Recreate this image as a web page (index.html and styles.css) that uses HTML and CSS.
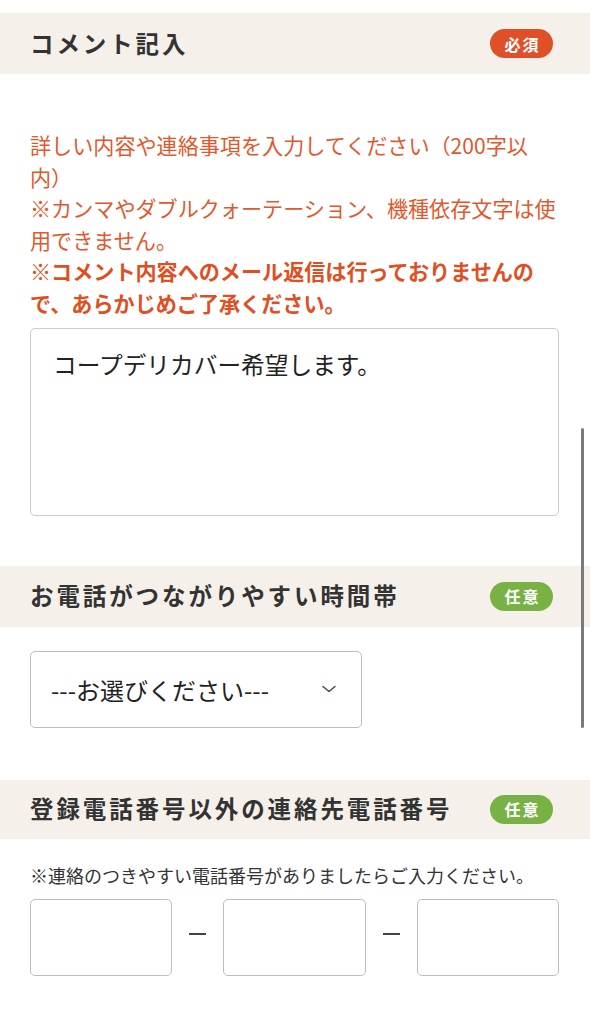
FILE: index.html
```html
<!DOCTYPE html>
<html lang="ja">
<head>
<meta charset="utf-8">
<title>お問い合わせフォーム</title>
<link rel="stylesheet" href="styles.css">
</head>
<body>
<main class="page">
  <section class="field field-comment">
    <div class="field-head">
      <h2 class="field-title">コメント記入</h2>
      <span class="badge badge-required">必須</span>
    </div>
    <div class="field-body">
      <p class="notes">詳しい内容や連絡事項を入力してください（200字以内）<br>※カンマやダブルクォーテーション、機種依存文字は使用できません。<br><strong>※コメント内容へのメール返信は行っておりませんので、あらかじめご了承ください。</strong></p>
      <textarea class="textarea" readonly>コープデリカバー希望します。</textarea>
    </div>
  </section>

  <section class="field field-time">
    <div class="field-head">
      <h2 class="field-title">お電話がつながりやすい時間帯</h2>
      <span class="badge badge-optional">任意</span>
    </div>
    <div class="field-body">
      <div class="select" role="combobox" aria-expanded="false">
        <span class="select-text">---お選びください---</span>
        <svg class="chevron" width="16" height="10" viewBox="0 0 16 10" aria-hidden="true"><path d="M2 2.5 L8 7.5 L14 2.5" fill="none" stroke="#3f5a3c" stroke-width="1.6" stroke-linecap="round" stroke-linejoin="round"/></svg>
      </div>
    </div>
  </section>

  <section class="field field-phone">
    <div class="field-head">
      <h2 class="field-title">登録電話番号以外の連絡先電話番号</h2>
      <span class="badge badge-optional">任意</span>
    </div>
    <div class="field-body">
      <p class="note">※連絡のつきやすい電話番号がありましたらご入力ください。</p>
      <div class="phone-row">
        <input class="input" type="tel" aria-label="市外局番">
        <span class="dash"></span>
        <input class="input" type="tel" aria-label="市内局番">
        <span class="dash"></span>
        <input class="input" type="tel" aria-label="加入者番号">
      </div>
    </div>
  </section>
</main>
<div class="scroll-indicator"></div>
</body>
</html>
```

FILE: styles.css
```css
html, body {
  margin: 0;
  padding: 0;
  background: #ffffff;
}

body {
  font-family: "Noto Sans CJK JP", "Noto Sans", sans-serif;
  color: #222;
}

.page {
  padding-top: 13px;
}

.field-head {
  display: flex;
  align-items: center;
  justify-content: space-between;
  height: 61px;
  padding: 0 37px 0 30px;
  background: #f5f1ea;
}

.field-title {
  margin: 0;
  font-size: 23.5px;
  font-weight: 700;
  letter-spacing: 2.9px;
  color: #333333;
  line-height: 1;
}

.badge {
  display: flex;
  align-items: center;
  justify-content: center;
  width: 63px;
  height: 29px;
  border-radius: 15px;
  color: #ffffff;
  font-size: 16px;
  font-weight: 700;
  letter-spacing: 2px;
  padding-left: 2px;
  box-sizing: border-box;
}

.badge-required {
  background: #df4f28;
}

.badge-optional {
  background: #78b244;
}

.field-body {
  padding: 0 31px 0 30px;
}

.field-comment .field-body {
  padding-right: 27px;
}

.notes {
  margin: 56px 0 0;
  font-size: 21.1px;
  line-height: 31.6px;
  color: #e2582c;
}

.notes strong {
  font-weight: 700;
  color: #e04f22;
}

.textarea {
  display: block;
  width: calc(100% - 4px);
  height: 188px;
  box-sizing: border-box;
  margin-top: 8px;
  padding: 17px 22px;
  border: 1.5px solid #cccccc;
  border-radius: 5px;
  font-family: "Noto Sans CJK JP", "Noto Sans", sans-serif;
  font-size: 23.7px;
  line-height: 36px;
  color: #222;
  resize: none;
  overflow: hidden;
  background: #fff;
  outline: none;
}

.field-time {
  margin-top: 50px;
}

.select {
  display: flex;
  align-items: center;
  justify-content: space-between;
  width: 332px;
  height: 77px;
  box-sizing: border-box;
  margin-top: 24px;
  padding: 0 24px 0 20px;
  border: 1.5px solid #bdbdbd;
  border-radius: 5px;
}

.select-text {
  font-size: 24px;
  color: #222;
}

.chevron {
  display: block;
}

.field-phone {
  margin-top: 52px;
}

.field-phone .field-head {
  height: 59px;
}

.note {
  margin: 23px 0 0;
  font-size: 18px;
  line-height: 27px;
  color: #333;
}

.phone-row {
  display: grid;
  grid-template-columns: 1fr 51px 1fr 51px 1fr;
  align-items: center;
  margin-top: 10px;
}

.input {
  display: block;
  width: 100%;
  height: 77px;
  box-sizing: border-box;
  border: 1.5px solid #bdbdbd;
  border-radius: 5px;
  background: #fff;
  outline: none;
}

.dash {
  display: block;
  width: 17px;
  height: 1.6px;
  margin: 0 auto;
  background: #444;
  position: relative;
  top: -3px;
}

.scroll-indicator {
  position: fixed;
  top: 428px;
  right: 6px;
  width: 3.5px;
  height: 300px;
  border-radius: 2px;
  background: #7a7a7a;
}
```
